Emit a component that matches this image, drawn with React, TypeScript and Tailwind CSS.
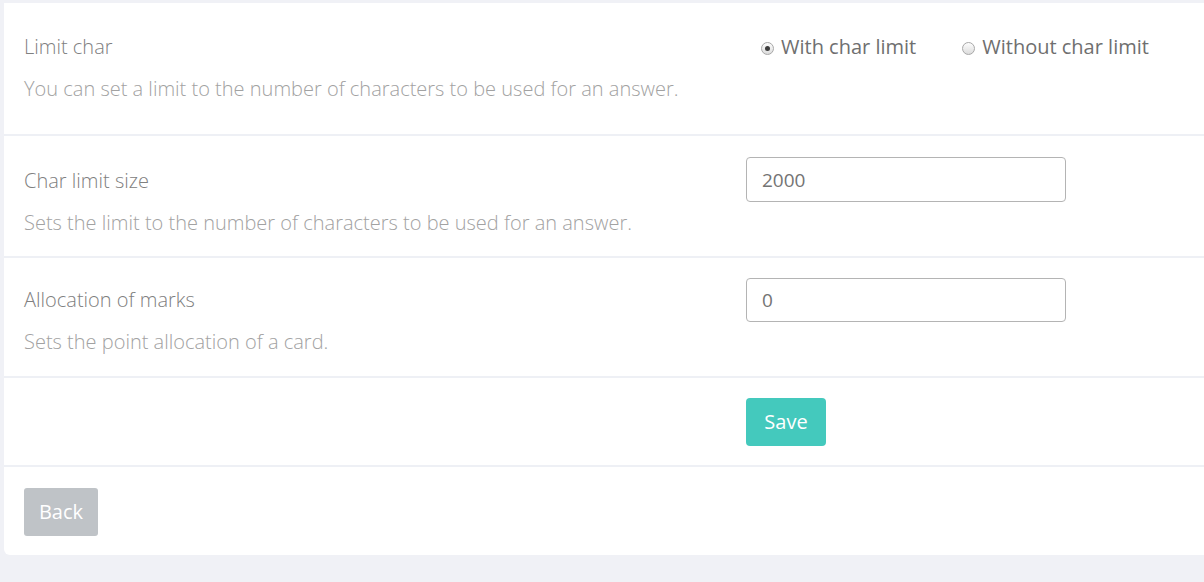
import { useState } from "react";

const FONT = "font-['Open_Sans','Liberation_Sans',sans-serif]";

function Radio({ checked, label, onClick }: { checked: boolean; label: string; onClick: () => void }) {
  return (
    <label onClick={onClick} className="flex items-center cursor-pointer">
      <span className="flex items-center justify-center w-[13px] h-[13px] rounded-full border border-[#a8a8a8] bg-gradient-to-b from-[#fdfdfd] to-[#dcdcdc] mr-[7px] mt-[2px]">
        {checked && <span className="w-[5px] h-[5px] rounded-full bg-[#3c3c3c]" />}
      </span>
      <span className="text-[20px] text-[#6f6f6f]">{label}</span>
    </label>
  );
}

function Row({ label, hint, children, h }: { label?: string; hint?: string; children: React.ReactNode; h: string }) {
  return (
    <div className={`flex border-b-2 border-[#eef0f5] ${h}`}>
      <div className="w-[742px] shrink-0 pl-5">
        {label && <p className="text-[20px] font-light text-[#808080] leading-[26px]">{label}</p>}
        {hint && <p className="text-[20px] font-light text-[#a2a2a2] leading-[26px] mt-[16px]">{hint}</p>}
      </div>
      <div className="flex-1">{children}</div>
    </div>
  );
}

export default function App() {
  const [limited, setLimited] = useState(true);
  const [size, setSize] = useState("2000");
  const [marks, setMarks] = useState("0");

  return (
    <div className={`min-h-[582px] bg-[#f0f1f6] pt-[3px] pl-1 ${FONT}`}>
      <div className="bg-white rounded-bl-md w-[1220px] pb-[19px]">
        <Row label="Limit char" hint="You can set a limit to the number of characters to be used for an answer." h="h-[133px] pt-[31px]">
          <div className="flex gap-[46px] pl-[15px] -mt-[2px]">
            <Radio checked={limited} label="With char limit" onClick={() => setLimited(true)} />
            <Radio checked={!limited} label="Without char limit" onClick={() => setLimited(false)} />
          </div>
        </Row>
        <Row label="Char limit size" hint="Sets the limit to the number of characters to be used for an answer." h="h-[122px] pt-[32px]">
          <input
            value={size}
            onChange={(e) => setSize(e.target.value)}
            className="-mt-[11px] w-[320px] h-[45px] border-[1.5px] border-[#b4b4b4] rounded-[4px] px-[15px] text-[19px] text-[#747474] outline-none"
          />
        </Row>
        <Row label="Allocation of marks" hint="Sets the point allocation of a card." h="h-[120px] pt-[29px]">
          <input
            value={marks}
            onChange={(e) => setMarks(e.target.value)}
            className="-mt-[9px] w-[320px] h-[44px] border-[1.5px] border-[#b4b4b4] rounded-[4px] px-[15px] text-[19px] text-[#747474] outline-none"
          />
        </Row>
        <Row h="h-[89px] pt-5">
          <button className="w-[80px] h-[48px] rounded-[4px] bg-[#44c9bd] text-white text-[20px]">Save</button>
        </Row>
        <div className="pl-5 pt-[21px]">
          <button className="w-[74px] h-[48px] rounded-[3px] bg-[#bfc3c7] text-white text-[20px]">Back</button>
        </div>
      </div>
    </div>
  );
}
